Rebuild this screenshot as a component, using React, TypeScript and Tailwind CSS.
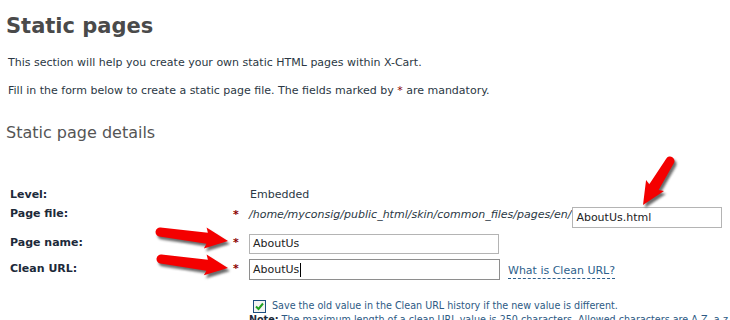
import React from 'react';

// Red call-out arrow drawn from tail (x1, y1) to tip (x2, y2)
function Arrow({ x1, y1, x2, y2 }: { x1: number; y1: number; x2: number; y2: number }) {
    const len = Math.hypot(x2 - x1, y2 - y1);
    const deg = (Math.atan2(y2 - y1, x2 - x1) * 180) / Math.PI;
    const h = len - 21;
    const d = `M 0 -4.5 L ${h} -5.5 L ${h - 2} -10.5 L ${len} 0 L ${h - 2} 10.5 L ${h} 5.5 L 0 4.5 A 4.5 4.5 0 0 1 0 -4.5 Z`;
    return (
        <g>
            <g transform={`translate(${x1 + 2} ${y1 + 3}) rotate(${deg})`} filter="url(#arrowBlur)">
                <path d={d} fill="#3a3a3a" opacity="0.75" />
            </g>
            <g transform={`translate(${x1} ${y1}) rotate(${deg})`}>
                <path d={d} fill="#f40000" />
            </g>
        </g>
    );
}

function Star() {
    return <span className="text-[#8b0000] text-[11px] font-bold">*</span>;
}

export default function App() {
    return (
        <div
            className="relative w-[730px] h-[320px] overflow-hidden bg-white text-[#2b3844]"
            style={{ fontFamily: '"DejaVu Sans", Verdana, sans-serif' }}
        >
            <div className="pl-[6px] pt-[13px]">
                {/* Page heading */}
                <h1 className="text-[21px] leading-[26px] font-bold text-[#4a4a4a]">Static pages</h1>

                <p className="mt-[17px] text-[11px] leading-[14px] pl-[2px]">
                    This section will help you create your own static HTML pages within X-Cart.
                </p>
                <p className="mt-[14px] text-[11px] leading-[14px] pl-[2px]">
                    Fill in the form below to create a static page file. The fields marked by{' '}
                    <span className="text-[#8b0000]">*</span> are mandatory.
                </p>

                <h2 className="mt-[25px] text-[16px] leading-[20px] text-[#555]">Static page details</h2>
            </div>

            {/* Form rows */}
            <div className="mt-[43px] pl-[10px] text-[11px]">
                <div className="flex items-center h-[18px]">
                    <div className="w-[219px] font-bold text-[#1d2a3a]">Level:</div>
                    <div className="w-[20px]" />
                    <div className="pl-[1px]">Embedded</div>
                </div>

                <div className="flex items-center h-[22px] mt-[2px]">
                    <div className="w-[219px] font-bold text-[#1d2a3a] -mt-[6px]">Page file:</div>
                    <div className="w-[20px] pl-[4px] -mt-[4px]"><Star /></div>
                    <div className="italic whitespace-nowrap -mt-[4px]">/home/myconsig/public_html/skin/common_files/pages/en/</div>
                    <div className="ml-[1px] w-[150px] h-[21px] border border-[#b4b4b4] pl-[3px] leading-[19px] text-[#222]">
                        AboutUs.html
                    </div>
                </div>

                <div className="flex items-center h-[21px] mt-[5px]">
                    <div className="w-[219px] font-bold text-[#1d2a3a]">Page name:</div>
                    <div className="w-[20px] pl-[4px]"><Star /></div>
                    <div className="w-[250px] h-[20px] border border-[#b4b4b4] pl-[3px] leading-[18px] text-[#222]">
                        AboutUs
                    </div>
                </div>

                <div className="flex items-center h-[21px] mt-[5px]">
                    <div className="w-[219px] font-bold text-[#1d2a3a]">Clean URL:</div>
                    <div className="w-[20px] pl-[4px]"><Star /></div>
                    <div className="w-[251px] h-[21px] border border-[#8e8e8e] pl-[3px] leading-[19px] text-[#222] flex items-center">
                        AboutUs<span className="inline-block w-px h-[14px] bg-black ml-[1px]" />
                    </div>
                    <a className="ml-[8px] text-[#2d5f8c] border-b border-dashed border-[#2d5f8c] leading-[14px] mt-[4px]">
                        What is Clean URL?
                    </a>
                </div>

                <div className="flex items-center h-[16px] mt-[18px] pl-[243px] text-[9.6px] text-[#2d5a84]">
                    <div className="w-[13px] h-[13px] border border-[#1c4e80] bg-[#f4f4f4] flex items-center justify-center">
                        <svg width="9" height="9" viewBox="0 0 9 9">
                            <path d="M1 4.5 L3.5 7 L8 1.5" stroke="#21a121" strokeWidth="2" fill="none" />
                        </svg>
                    </div>
                    <span className="ml-[6px] whitespace-nowrap">
                        Save the old value in the Clean URL history if the new value is different.
                    </span>
                </div>
                <div className="pl-[239px] text-[9.6px] leading-[12px] whitespace-nowrap text-[#2d5a84]">
                    <b className="text-[#1d2a3a]">Note:</b> The maximum length of a clean URL value is 250 characters. Allowed characters are A-Z, a-z, 0-9, dash and underscore.
                </div>
            </div>

            {/* Call-out arrows over the form */}
            <svg className="absolute left-0 top-0 pointer-events-none" width="730" height="320">
                <defs>
                    <filter id="arrowBlur" x="-20%" y="-50%" width="140%" height="200%">
                        <feGaussianBlur stdDeviation="1.3" />
                    </filter>
                </defs>
                <Arrow x1={160} y1={232} x2={228} y2={241} />
                <Arrow x1={161} y1={259} x2={228} y2={268} />
                <Arrow x1={670} y1={161} x2={643} y2={205} />
            </svg>
        </div>
    );
}
